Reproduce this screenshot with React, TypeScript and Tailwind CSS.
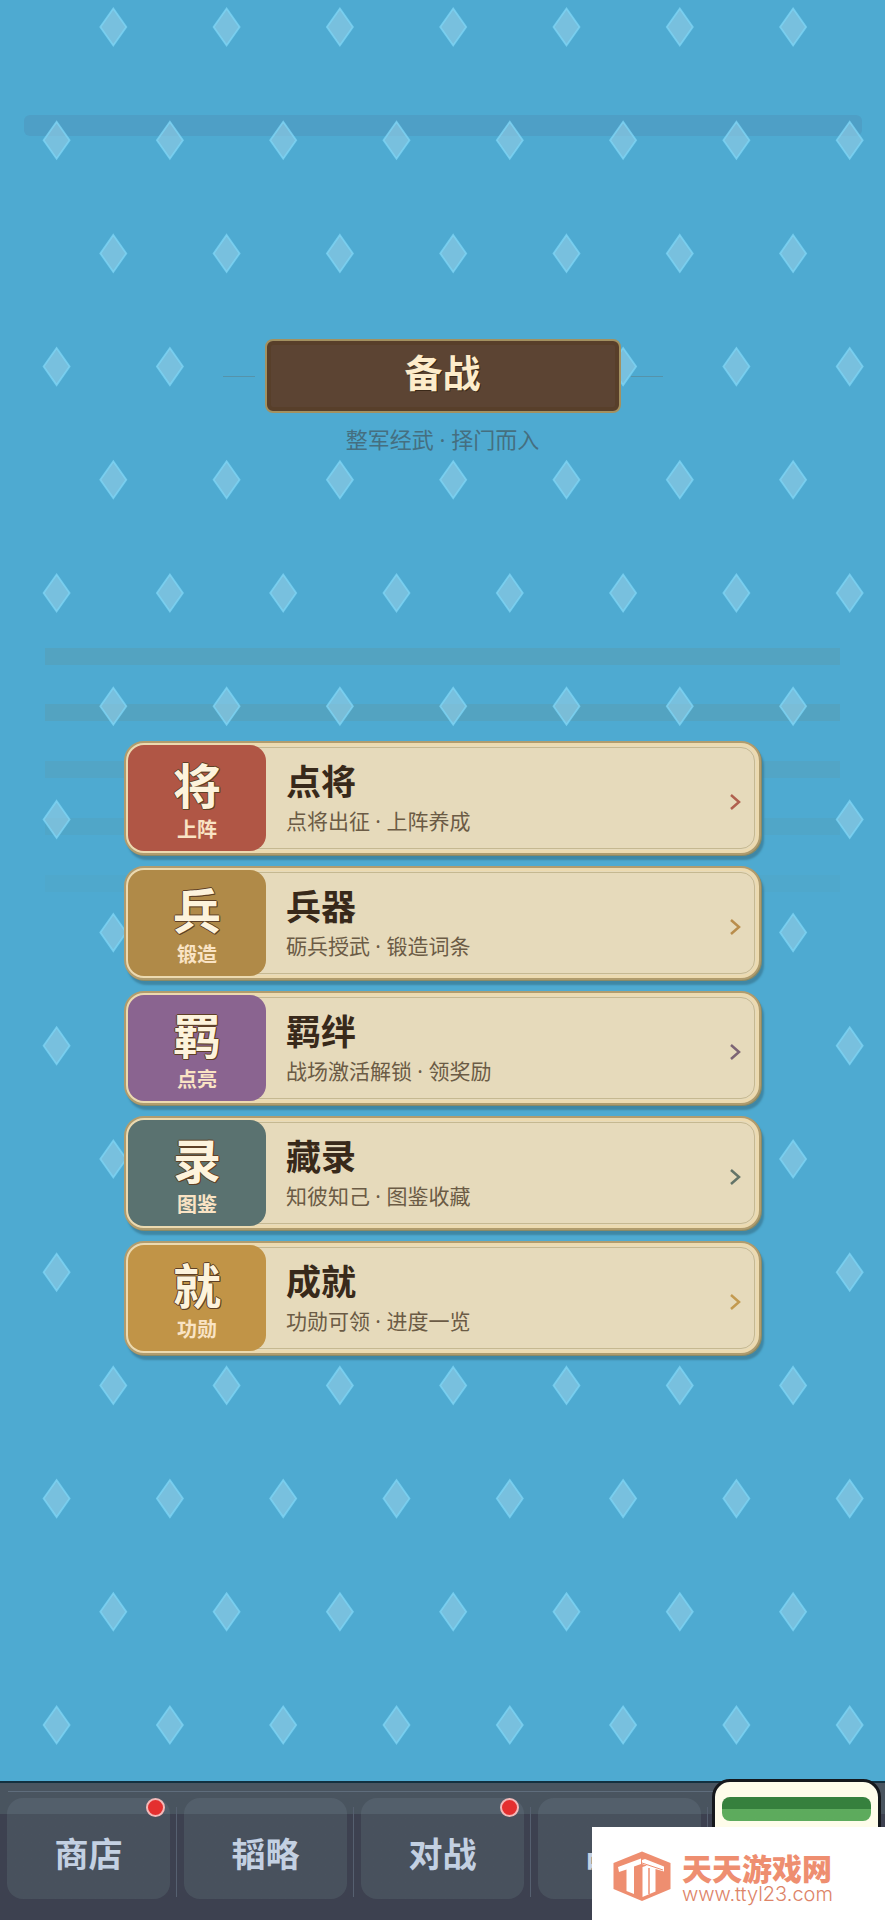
import React from 'react';

const cards = [
    { glyph: '将', tag: '上阵', title: '点将', desc: '点将出征 · 上阵养成', bg: 'bg-[#b05645]', arrow: 'text-[#b0604e]' },
    { glyph: '兵', tag: '锻造', title: '兵器', desc: '砺兵授武 · 锻造词条', bg: 'bg-[#b08a48]', arrow: 'text-[#b98d4c]' },
    { glyph: '羁', tag: '点亮', title: '羁绊', desc: '战场激活解锁 · 领奖励', bg: 'bg-[#8a6490]', arrow: 'text-[#7c6474]' },
    { glyph: '录', tag: '图鉴', title: '藏录', desc: '知彼知己 · 图鉴收藏', bg: 'bg-[#5a7270]', arrow: 'text-[#637468]' },
    { glyph: '就', tag: '功勋', title: '成就', desc: '功勋可领 · 进度一览', bg: 'bg-[#c19447]', arrow: 'text-[#c39a50]' },
];

const tabs = [
    { name: '商店', dot: true },
    { name: '韬略', dot: false },
    { name: '对战', dot: true },
    { name: '战报', dot: false },
];

const stripes = [
    { y: 648, opacity: 0.7 },
    { y: 704, opacity: 0.7 },
    { y: 761, opacity: 0.5 },
    { y: 818, opacity: 0.4 },
    { y: 875, opacity: 0.2 },
];

function Backdrop() {
    const diamonds: { x: number; y: number }[] = [];
    for (let row = 0; row < 16; row++) {
        const odd = row % 2 === 1;
        for (let col = 0; col < (odd ? 8 : 7); col++) {
            diamonds.push({ x: (odd ? 56.6 : 113.3) + col * 113.3, y: 27 + row * 113.2 });
        }
    }
    return (
        <svg className="absolute inset-0 h-full w-full" viewBox="0 0 885 1920" preserveAspectRatio="xMidYMin slice" aria-hidden="true">
            <rect x="24" y="115" width="838" height="21" rx="6" fill="#4e9fc6" />
            {stripes.map((s) => (
                <rect key={s.y} x="45" y={s.y} width="795" height="17" fill="#559fbb" opacity={s.opacity} />
            ))}
            {diamonds.map((d, i) => (
                <path
                    key={i}
                    d={`M${d.x} ${d.y - 18.5}L${d.x + 13} ${d.y}L${d.x} ${d.y + 18.5}L${d.x - 13} ${d.y}Z`}
                    fill="#94cfe6"
                    fillOpacity="0.6"
                    stroke="#7fd6f5"
                    strokeOpacity="0.75"
                    strokeWidth="1.8"
                />
            ))}
        </svg>
    );
}

function Card({ card }: { card: (typeof cards)[number] }) {
    return (
        <button
            type="button"
            className="relative flex h-[114px] w-full items-center rounded-[20px] border-2 border-[#b09c6e] bg-[#e6dabb] p-[2px] text-left shadow-[inset_0_0_0_3px_#ecdab0,1px_1px_0_#8a8a66,3px_5px_2px_#3f87a5]"
        >
            <span className="pointer-events-none absolute inset-[4px] rounded-[14px] border border-[#c5b891]"></span>
            <span className={'relative flex h-full w-[138px] flex-col items-center justify-center rounded-[16px] pt-2 ' + card.bg}>
                <span className="text-[48px] leading-[52px] font-bold text-[#fdf3dc] [text-shadow:1px_0_#5e4026,-1px_0_#5e4026,0_1px_#5e4026,0_-1px_#5e4026,1px_1px_#5e4026]">
                    {card.glyph}
                </span>
                <span className="mt-1 text-[20px] leading-[28px] font-bold text-[#f9e3c4]">{card.tag}</span>
            </span>
            <span className="ml-5 flex flex-1 flex-col pt-1">
                <span className="text-[35px] leading-[42px] font-bold text-[#38291a]">{card.title}</span>
                <span className="text-[21px] leading-[36px] text-[#6b5b45]">{card.desc}</span>
            </span>
            <svg className={'mt-2 mr-3 h-5 w-4 ' + card.arrow} viewBox="0 0 16 20" fill="none" stroke="currentColor" strokeWidth="2.5">
                <path d="M2 3L10 10L2 17" />
            </svg>
        </button>
    );
}

function Watermark() {
    return (
        <a href="#" className="absolute right-0 bottom-0 flex h-[93px] w-[293px] items-center bg-white pt-[6px] pl-[21px]">
            <svg className="h-[52px] w-[59px]" viewBox="0 0 59 52" fill="none">
                <path d="M29 0.500L57.500 12V38L29 50L0.500 38V12Z" fill="#ee8e70" />
                <path d="M5 16L28 7.500V13L21 15.500V43L13.500 40V18.500L6 21Z" fill="#fff" />
                <path d="M29 9L32 8L51 15.500V20.500L42.500 18V40.500L29.500 46V16L34 14.500L29 13Z" fill="#fff" />
                <path d="M36 17V43" stroke="#ee8e70" strokeWidth="1.500" />
                <path d="M29 12L50 19" stroke="#ee8e70" strokeWidth="1" />
            </svg>
            <span className="ml-[10px] flex flex-col pt-1">
                <span className="text-[30px] leading-[30px] font-black text-[#ee8e70]">天天游戏网</span>
                <span className="font-['Inter'] text-[20px] leading-[20px] font-light text-[#dd8468]">www.ttyl23.com</span>
            </span>
        </a>
    );
}

function App() {
    return (
        <div className="relative flex min-h-screen flex-col overflow-hidden bg-[#4eaad1] font-['Noto_Sans','Noto_Sans_CJK_SC',sans-serif]">
            <Backdrop />
            <main className="relative flex flex-1 flex-col items-center pt-[339px]">
                <div className="flex items-center gap-[10px]">
                    <span className="h-px w-8 bg-[#5593aa]"></span>
                    <h1 className="flex h-[74px] w-[356px] items-center justify-center rounded-lg border-2 border-[#a39160] bg-[#5c4433] pb-2 text-[38px] leading-none font-bold text-[#fdeccb] shadow-[inset_0_0_0_4px_#583f2a] [text-shadow:1px_1px_#3a2818]">
                        备战
                    </h1>
                    <span className="h-px w-8 bg-[#5593aa]"></span>
                </div>
                <p className="mt-2 text-[22px] leading-[36px] text-[#456f80]">整军经武 · 择门而入</p>
                <div className="mt-[284px] flex w-[72%] flex-col gap-[11px]">
                    {cards.map((card) => (
                        <Card key={card.title} card={card} />
                    ))}
                </div>
            </main>
            <nav className="relative grid h-[139px] grid-cols-5 border-t-2 border-[#12303f] bg-linear-to-b from-[#49545f] from-[31px] to-[#3d4150] to-[31px]">
                <span className="absolute top-2 right-2 left-2 h-px bg-[#5f6d7c]"></span>
                {tabs.map((tab) => (
                    <div key={tab.name} className="relative px-[7px] pt-[15px]">
                        <button
                            type="button"
                            className="h-[101px] w-full rounded-[16px] bg-linear-to-b from-[#535f6b] from-[16px] to-[#48515d] to-[16px] pt-3 text-[34px] font-bold text-[#c3d0e2]"
                        >
                            {tab.name}
                        </button>
                        {tab.dot && (
                            <span className="absolute top-[15px] right-[12px] h-[19px] w-[19px] rounded-full border-2 border-[#f3b9b9] bg-[#e42f2f]"></span>
                        )}
                        <span className="absolute top-6 right-0 h-[90px] w-px bg-[#566070]"></span>
                    </div>
                ))}
                <div className="pr-1 pl-1">
                    <button
                        type="button"
                        aria-label="备战"
                        className="relative -top-1 flex h-[140px] w-full flex-col items-center rounded-[18px] border-3 border-[#15181c] bg-[#fefcea] px-[7px] pt-[15px]"
                    >
                        <span className="h-6 w-full rounded-[8px] bg-linear-to-b from-[#36803d] from-[12px] to-[#5dab5d] to-[12px]"></span>
                    </button>
                </div>
            </nav>
            <Watermark />
        </div>
    );
}

export default App;
